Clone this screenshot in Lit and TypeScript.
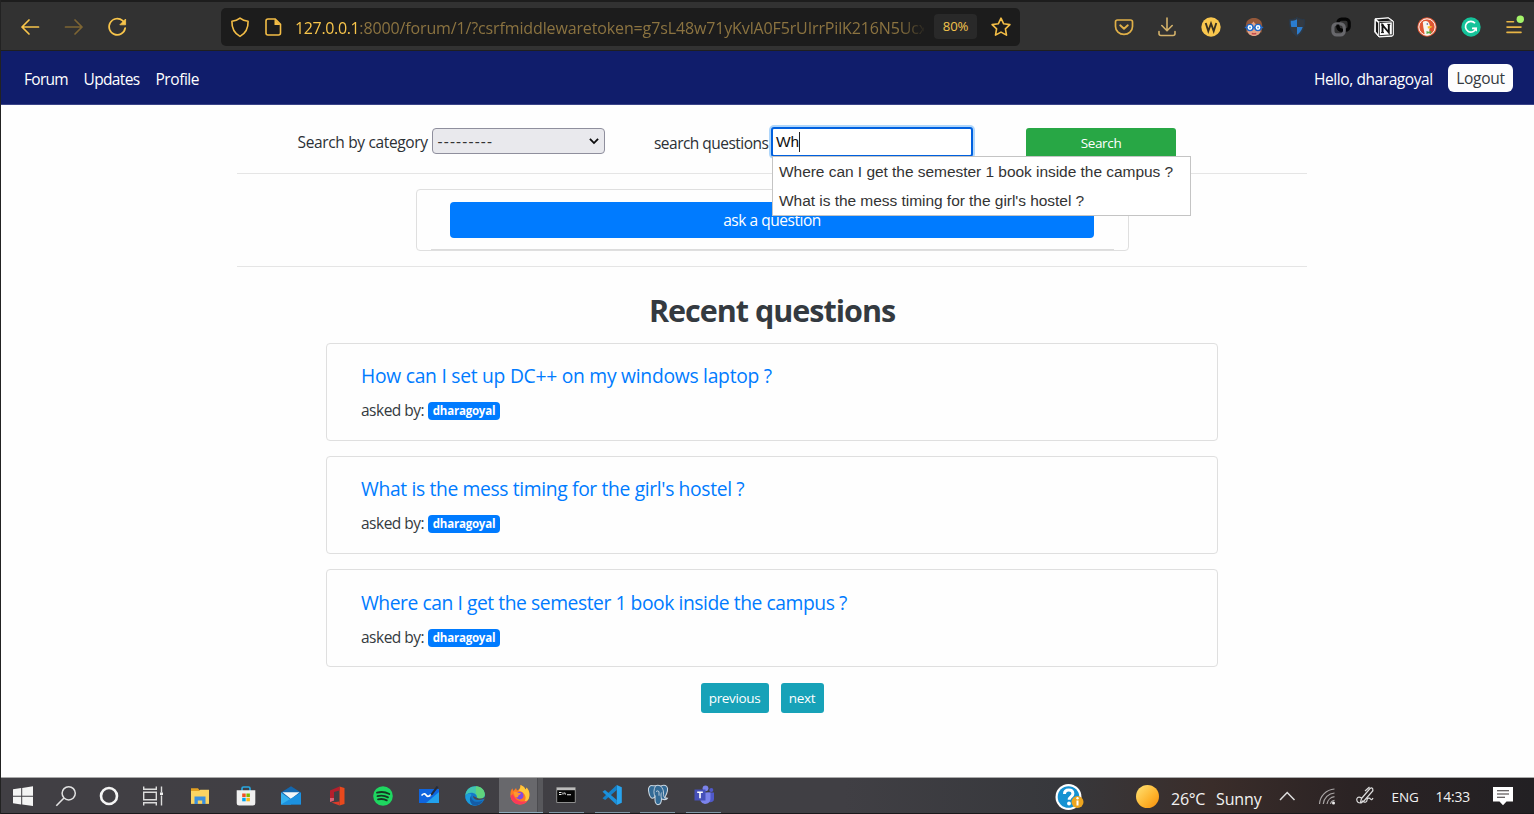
import { LitElement, html, svg, css, type SVGTemplateResult } from "lit";
import { customElement, property } from "lit/decorators.js";
import { styleMap } from "lit/directives/style-map.js";

const GOLD = "#f3bd46";

const icons: Record<string, SVGTemplateResult> = {
  back: svg`<path d="M20.5 12H4M11 5l-7 7 7 7" fill="none" stroke="#f8c54b" stroke-width="1.7" stroke-linecap="round" stroke-linejoin="round"/>`,
  forward: svg`<path d="M3.5 12H20M13 5l7 7-7 7" fill="none" stroke="#7d6533" stroke-width="1.7" stroke-linecap="round" stroke-linejoin="round"/>`,
  reload: svg`<path d="M20.2 13a8.1 8.1 0 1 1-2.6-7.3l1.4 1.4" fill="none" stroke="#f8c54b" stroke-width="1.7" stroke-linecap="round"/><path d="M20.6 4v5.8h-5.8z" fill="#f8c54b" stroke="#f8c54b" stroke-width=".8" stroke-linejoin="round"/>`,
  guard: svg`<path d="M12 3.2c2.3 1.9 5 2.8 8.1 3 .2 7-2.3 12-8.1 15.2C6.200 18.200 3.700 13.200 3.900 6.200 7 6 9.700 5.100 12 3.200z" fill="none" stroke="${GOLD}" stroke-width="1.6" stroke-linejoin="round"/>`,
  page: svg`<path d="M7 4h7.200l5.300 5.300V18a2 2 0 0 1-2 2H7a2 2 0 0 1-2-2V6a2 2 0 0 1 2-2z" fill="none" stroke="${GOLD}" stroke-width="1.6"/><path d="M13.500 4v6h6z" fill="${GOLD}"/>`,
  star: svg`<path d="M12 3.200l2.700 5.600 6.200.8-4.500 4.300 1.100 6.200L12 17.100l-5.500 3 1.100-6.200-4.500-4.300 6.200-.8z" fill="none" stroke="${GOLD}" stroke-width="1.6" stroke-linejoin="round"/>`,
  pocket: svg`<path d="M5.500 5h13a2 2 0 0 1 2 2v4.500a8.500 7.800 0 0 1-17 0V7a2 2 0 0 1 2-2z" fill="none" stroke="#e0b048" stroke-width="1.7"/><path d="M8.200 10.300L12 13.800l3.800-3.500" fill="none" stroke="#e0b048" stroke-width="1.9" stroke-linecap="round" stroke-linejoin="round"/>`,
  download: svg`<path d="M12 3v12.500M6.800 10.500l5.200 5.200 5.200-5.200M4 16.500v2a2 2 0 0 0 2 2h12a2 2 0 0 0 2-2v-2" fill="none" stroke="#d3b16a" stroke-width="1.6" stroke-linecap="round" stroke-linejoin="round"/>`,
  w: svg`<circle cx="12" cy="12" r="9.700" fill="#f9c74e"/><path d="M6.700 8l2.600 8L12 8.500l2.700 7.500L17.300 8" fill="none" stroke="#3a3222" stroke-width="1.900"/>`,
  face: svg`<path d="M3.800 12C3.500 5.500 7.500 3 12 3s8.500 2.500 8.200 9l-.7 5.500h-15z" fill="#94583a"/><path d="M5.300 11c2.500-.5 5-2.500 6.200-4.500 1.500 2.500 4.200 4 7.200 4.500v4c0 3.700-3 6-6.700 6s-6.700-2.300-6.700-6z" fill="#e5a385"/><path d="M2.800 12.500h18.400" stroke="#1b67c9" stroke-width="1.500"/><circle cx="8" cy="12.500" r="3.100" fill="#fff" stroke="#1b67c9" stroke-width="1.400"/><circle cx="16" cy="12.500" r="3.100" fill="#fff" stroke="#1b67c9" stroke-width="1.400"/><circle cx="8" cy="12.500" r="1" fill="#5a9be0"/><circle cx="16" cy="12.500" r="1" fill="#5a9be0"/><path d="M9.800 18.300q2.200 1 4.400 0" stroke="#c2454a" stroke-width="1.300" fill="none"/>`,
  shield: svg`<path d="M12 2.500c2 1.500 4.500 2 7.500 2.200C19.800 13 17.200 18.300 12 21.500 6.800 18.300 4.200 13 4.500 4.700 7.500 4.500 10 4 12 2.500z" fill="#343a42" stroke="#29394a" stroke-width="1"/><path d="M12 4.200V12H6.300c-.5-2-.7-4-.6-6.200 2.300-.1 4.600-.6 6.300-1.600zM12 12h5.700c-.9 3.200-2.700 5.800-5.700 7.700z" fill="#2a7ccf"/>`,
  link: svg`<rect x="8.900" y="4.200" width="11.300" height="11" rx="3.600" fill="none" stroke="#050505" stroke-width="3.200"/><rect x="3.900" y="8.900" width="11.300" height="11" rx="3.600" fill="none" stroke="#68686c" stroke-width="3.200"/><path d="M8.900 9.500v2.100a3.600 3.600 0 0 0 3.600 3.600H14" fill="none" stroke="#050505" stroke-width="2.800"/>`,
  notion: svg`<path d="M3 3.800L16.500 2.700 21.300 6.200V20l-1 1.200L7 22l-4.300-5z" fill="#fff" stroke="#fff" stroke-width="1"/><path d="M4.500 4.500l11.700-.9 3 2.200-12 .8z" fill="#161616"/><path d="M3.900 6L6 7.700v11.500l-2.100-2.700z" fill="#161616"/><path d="M7.300 7.600l13-.8v13l-13 .9z" fill="#fff" stroke="#161616" stroke-width=".9"/><path d="M10.500 17.500V10l6.300 7.500V9.300" fill="none" stroke="#111" stroke-width="1.900"/><path d="M9 10h2.800M15.300 9.400h3M9 17.600h3" stroke="#111" stroke-width="1"/>`,
  duck: svg`<circle cx="12" cy="12" r="9.700" fill="#df5632"/><circle cx="12" cy="12" r="8.200" fill="none" stroke="#fff" stroke-width="1"/><path d="M7.800 7c2.500-2.200 6.500-1 7 3.200.3 2.500-.5 3.800-.5 5l.8 4.500q-2.700 1-5.300.3L8.300 12z" fill="#f7f4ee"/><path d="M12.500 11.500q3-.9 5 .2-2 1.900-4.500 1.700z" fill="#f8bf29"/><path d="M11.500 16l2 .8 2.700-1v3l-2.700-.6-2 .8z" fill="#56ad48"/><circle cx="12.300" cy="9" r=".8" fill="#2d4f8e"/>`,
  gram: svg`<circle cx="12" cy="12" r="9.700" fill="#15c39a"/><path d="M16 8.200a5.400 5.400 0 1 0 1 5.200H13" fill="none" stroke="#fff" stroke-width="1.700"/><path d="M14 12.700h4v4z" fill="#fff"/>`,
  menu: svg`<path d="M5 6.800h6.500M5 12.100h14M5 17.400h14" stroke="#e8b545" stroke-width="1.600" stroke-linecap="round"/><circle cx="18.300" cy="4.200" r="3.700" fill="#a4f46a"/>`,

  windows: svg`<path d="M2 5.200l8.200-1.200v7.700H2zM11.200 3.900L22 2.300v9.400H11.200zM2 12.700h8.200v7.800L2 19.300zM11.200 12.700H22v9.400l-10.800-1.600z" fill="#f4f4f4"/>`,
  search: svg`<circle cx="14.700" cy="9.300" r="6.600" fill="none" stroke="#e2e2e2" stroke-width="1.500"/><path d="M10 14l-7.700 7.700" stroke="#e2e2e2" stroke-width="1.600"/>`,
  cortana: svg`<circle cx="12" cy="12" r="8" fill="none" stroke="#f4f4f4" stroke-width="2.600"/>`,
  tasks: svg`<path d="M2.700 2.500v2.700h12.600V2.500M2.700 21.500v-2.700h12.600v2.700M2.700 8.200h12.600v7.600H2.700zM20.500 2.500v6M20.500 11.500v10" fill="none" stroke="#dcdcdc" stroke-width="1.400"/><path d="M19 8.500h3v2.500h-3z" fill="#f0f0f0"/>`,
  folder: svg`<path d="M3 4.200h7l1.500 2H21v13.500H3z" fill="#e3a122"/><path d="M3 7h8l1.300-1.200H21v13.900H3z" fill="#fbd462"/><path d="M6.500 12.500h11v7.500h-3.300v-3.500H9.800V20H6.500z" fill="#3c8fdc"/>`,
  store: svg`<path d="M8 7V4.500A1.500 1.500 0 0 1 9.500 3h5A1.500 1.500 0 0 1 16 4.500V7" fill="none" stroke="#29a8e0" stroke-width="1.700"/><path d="M2.700 6.300h18.600V19a2.500 2.500 0 0 1-2.500 2.500H5.200A2.500 2.500 0 0 1 2.700 19z" fill="#f0f0f0"/><path d="M8.200 9.500h3.500V13H8.200z" fill="#f05125"/><path d="M12.400 9.500h3.500V13h-3.500z" fill="#7eb900"/><path d="M8.200 13.800h3.500v3.500H8.200z" fill="#00a3ee"/><path d="M12.400 13.800h3.500v3.500h-3.500z" fill="#fdb813"/>`,
  mail: svg`<path d="M2 8.500L12 2.300l10 6.200v12H2z" fill="#1467ad"/><path d="M3.500 8.300h17L12 15z" fill="#f3f6f8"/><path d="M2 8.500l10 7.200V20.500H2z" fill="#36b1ee"/><path d="M22 8.500L2 20.500h20z" fill="#1c91e0"/>`,
  office: svg`<path d="M14.500 2.500l5 1.500v16l-5 1.500z" fill="#e8491d"/><path d="M14.500 2.500v4L9 8v8.500L5 18V6.500z" fill="#b41f2c"/><path d="M14.500 21.500L6.500 18.600l8-1z" fill="#df3b2a"/><path d="M5 14v4l4-1.500V14z" fill="#dc6073"/>`,
  spotify: svg`<circle cx="12" cy="12" r="9.800" fill="#1ed760"/><path d="M6 8.700q6.500-1.900 12.300 1.300M6.500 12.200q5.700-1.500 10.500 1.200M7 15.400q4.900-1.200 8.800 1" fill="none" stroke="#173622" stroke-width="1.800" stroke-linecap="round"/>`,
  board: svg`<path d="M2 5h20v14H2z" fill="#0f65df"/><path d="M9 19L22 8v11z" fill="#22a1ed"/><path d="M4.500 11.500c3-3 4-1.500 5 0s3 .8 4.500-.8" fill="none" stroke="#fff" stroke-width="1.700"/><path d="M21.500 3l-5.700 7.500-2.300 1.500.7-2.800L19.600 2z" fill="#252b3a"/>`,
  edge: svg`<circle cx="12" cy="12" r="9.800" fill="#1478c8"/><path d="M2.200 12C3 5 7.500 2.200 12.300 2.200c5.700 0 9.500 4 9.500 8.300 0 4-5 5.300-8 3.200.9-4.500-7.500-7.500-11.600-1.700z" fill="#42c5b1"/><path d="M13 2.300c5.500.2 8.800 4.100 8.800 8.200 0 4-5 5.300-8 3.200.7-1.600.2-3.200-1-4.200z" fill="#60d47d"/><path d="M8.500 11c-1.500 5 3 9 10 7-5.500 6.500-15.500 3-16.200-5.200C4 9.500 7 8.500 8.500 11z" fill="#1b9bdc"/><path d="M8.500 11.200c-1 5.300 4.200 8.700 11.200 5.300-1.200 3.200-5.700 5.500-9 5-4-2-5-7.300-2.200-10.300z" fill="#155ca6"/><path d="M10 12c.2 3.500 5.300 5.500 10.600 3l1.400 1.500V13q-4 2.700-8 .7z" fill="#4a4a4f"/>`,
  firefox: svg`<path d="M12.500 2c3 1 4.500 3 4.700 4.500 1-.5 1.200-1.300 1.200-2C21 7 21.700 10 21.200 13.500 20.400 18.500 16.500 21.500 12 21.500c-5 0-9-3.600-9.500-8.500-.3-3 .2-5.500 1.800-7.700L5.500 8 8 5l1 2.500C11 7 12.700 5 12.500 2z" fill="#ff7b22"/><path d="M12.500 2c3 1 4.700 3 4.700 4.500 1-.5 1.200-1.300 1.200-2 3 2.700 3.600 6.500 2.600 10.500-1 2.500-3 4-5 4.500 3-4 2.200-9.500-5.300-12C12 6 12.600 4 12.500 2z" fill="#ffc83a"/><path d="M2.500 13c.5 5 4.500 8.500 9.500 8.500 3 0 6-1.300 7.700-4C14 20 7 18 5 11z" fill="#fa3b59"/><circle cx="11.700" cy="12.600" r="3.800" fill="#814be0"/><path d="M5.500 9c2-1 4 .3 6 1l1.700.5-3 2.300c.3 2-2.500 2.200-3.700-.3z" fill="#ff9730"/>`,
  cmd: svg`<path d="M2.700 4.500h18.600v15H2.700z" fill="#070707" stroke="#8e8e8e" stroke-width="1"/><path d="M3 5h18v2.200H3z" fill="#bcbcbc"/><path d="M5 9.500h2.500M5 11.500h2.500M9 9.500v2M10.500 9.500l1 2M13 11.700h4" stroke="#eee" stroke-width="1.100"/>`,
  code: svg`<path d="M16.800 2l5 2.300v15.400l-5 2.300z" fill="#27a4ef"/><path d="M16.800 7L5.200 17 2.500 15.200 16.800 2z" fill="#1582ca"/><path d="M16.800 17L5 7 2.500 8.800 16.800 22z" fill="#1b91dc"/>`,
  pg: svg`<path d="M7 2.700C4 2 2 4 2.500 7.500s1.500 7 3.500 7.700c1.400.3 2.300-1 3-1.700v3.200c0 3.300 1.500 5.300 3.700 4.800 2.500-.5 2.700-2.500 2.800-5.500 3 1 5.500.2 6-.8-.8-.2-2 0-2.800-.4 2-3.800 3.800-9.300 2-11.300-1.400-1.600-4-1.300-6-.6-2-.9-4-.8-5.200-.1C8.700 2.800 8 2.800 7 2.700z" fill="#336a95" stroke="#c9d5df" stroke-width="1.100"/><path d="M9 13.500c-1.500-3-1.500-7 .5-10.500M14.700 3c1.500 2 3 4 2.800 7 0 2-.2 3 1.200 4.600M15.500 16c-.6-3.500-.8-5 .2-6.500M10 8.500q2-1.400 3 .2v4" fill="none" stroke="#c9d5df" stroke-width=".9"/>`,
  teams: svg`<circle cx="19.300" cy="7" r="2" fill="#5059c9"/><circle cx="13.500" cy="5.300" r="2.900" fill="#7b83eb"/><path d="M15 9.500h7v6.500a3.300 3.300 0 0 1-5 2.800z" fill="#5059c9"/><path d="M8.500 9.500h10V16a5.300 5.300 0 0 1-10 2z" fill="#7b83eb"/><path d="M2.500 6.500h11v11h-11z" fill="#4650b8"/><path d="M5.200 9.300h5.600M8 9.300v5.900" stroke="#fff" stroke-width="1.600"/>`,
  chevron: svg`<path d="M5 16l7.200-7.500L19.500 16" fill="none" stroke="#dedede" stroke-width="1.500"/>`,
  wifi: svg`<path d="M4.500 20A16 16 0 0 1 19.500 5M8.300 20A12 12 0 0 1 19.500 9M12 20a8.500 8.500 0 0 1 7.500-7.300M15.500 20a4.500 4.500 0 0 1 4-3.700" fill="none" stroke="#a9a5a5" stroke-width="1.200"/><circle cx="18.500" cy="19" r="1.500" fill="#eee"/>`,
  pen: svg`<path d="M8.500 14.500L17 4.500q2-1.500 2.700.3t-.7 3L10.500 17.500l-3 .7zM12 7L16.500 3M8.500 14c-3.500-2.500-5.500.5-4.500 3s5 3 6-.5M10.500 17.500c1.500 1.500 3.500.5 3.500-1.500s2.500-2.500 3.500-1 1.500.5 2.500-1" fill="none" stroke="#dcdcdc" stroke-width="1.200"/>`,
  notice: svg`<path d="M2 3h20v14.500h-6.500L12 21.300l-3.500-3.800H2z" fill="#fff"/><path d="M6 6.700h12M6 10h12M6 13.300h8" stroke="#383333" stroke-width="1.100"/>`,
  caret: svg`<path d="M5 8.500l7 7 7-7" fill="none" stroke="#0c0c0d" stroke-width="3.200"/>`,
};

@customElement("app-icon")
class AppIcon extends LitElement {
  @property() name = "";
  static styles = css`
    :host { display: block; width: 24px; height: 24px; flex: none; }
    svg { display: block; width: 100%; height: 100%; overflow: visible; }
  `;
  render() {
    return html`<svg viewBox="0 0 24 24">${icons[this.name]}</svg>`;
  }
}

@customElement("browser-bar")
class BrowserBar extends LitElement {
  static styles = css`
    :host { display: flex; height: 51px; box-sizing: border-box; align-items: center; background: #323232;
      border-top: 2px solid #1d1d1d; border-bottom: 1px solid #1f1f1f; padding-right: 8px; }
    .nav { display: flex; gap: 19.500px; padding-left: 17px; width: 203px; box-sizing: content-box; padding-top: 2px; }
    .address { display: flex; align-items: center; width: 798.500px; height: 38px; background: #1c1c1c; border-radius: 5px;
      box-sizing: border-box; padding-left: 7px; margin-top: 1px; }
    .page { margin-left: 9px; }
    .url { margin-left: 10px; width: 629px; overflow: hidden; white-space: nowrap; font-size: 16px; line-height: 26px;
      letter-spacing: -0.130px; color: #8b7340; padding-top: 2px;
      mask-image: linear-gradient(to right, #000 96%, transparent 100.500%); }
    .host { color: #f8c54b; letter-spacing: -0.350px; }
    .zoom { width: 43px; height: 25px; margin-left: 10px; border-radius: 4px; background: #292929; color: #f3c34c;
      font-size: 13.200px; line-height: 25px; text-align: center; letter-spacing: -0.200px; }
    .star { margin-left: 12px; }
    .tools { margin-left: auto; display: flex; justify-content: space-between; width: 414px; margin-top: 1px; }
  `;
  render() {
    return html`
      <div class="nav">
        <app-icon name="back"></app-icon><app-icon name="forward"></app-icon><app-icon name="reload"></app-icon>
      </div>
      <div class="address">
        <app-icon name="guard"></app-icon>
        <app-icon class="page" name="page"></app-icon>
        <div class="url"><span class="host">127.0.0.1</span>:8000/forum/1/?csrfmiddlewaretoken=g7sL48w71yKvlA0F5rUIrrPilK216N5Ucx</div>
        <div class="zoom">80%</div>
        <app-icon class="star" name="star"></app-icon>
      </div>
      <div class="tools">
        ${["pocket", "download", "w", "face", "shield", "link", "notion", "duck", "gram", "menu"].map(
          (n) => html`<app-icon name=${n}></app-icon>`
        )}
      </div>
    `;
  }
}

@customElement("question-card")
class QuestionCard extends LitElement {
  @property() heading = "";
  @property() author = "";
  @property({ type: Number }) tracking = 0;
  static styles = css`
    :host { display: block; box-sizing: border-box; height: 98px; border: 1px solid #dfdfdf; border-radius: 4px; padding: 19.300px 34px; }
    .title { font-size: 19.300px; line-height: 26px; color: #007bff; white-space: nowrap; }
    .meta { display: flex; align-items: center; margin-top: 9px; height: 24px; white-space: nowrap; }
    .by { width: 67px; font-size: 15.500px; letter-spacing: -0.500px; color: #343a40; }
    .badge { width: 72px; height: 18px; margin-top: 2px; border-radius: 4px; background: #007bff; color: #fff; text-align: center;
      font-size: 11.500px; font-weight: 700; line-height: 18px; letter-spacing: -0.200px; }
  `;
  render() {
    return html`
      <div class="title" style=${styleMap({ letterSpacing: `${this.tracking}px` })}>${this.heading}</div>
      <div class="meta"><span class="by">asked by:</span><span class="badge">${this.author}</span></div>
    `;
  }
}

@customElement("task-bar")
class TaskBar extends LitElement {
  static styles = css`
    :host { display: flex; height: 37px; box-sizing: border-box; border-top: 1px solid #aaa; border-bottom: 1px solid #1b191b;
      background: linear-gradient(90deg, #413f44 0, #403f44 55%, #37383c 69%, #3a2d2a 79%, #2b2324 88%, #222023 100%); color: #f2f2f2; }
    .system { display: flex; width: 176px; }
    .system > div { width: 43.300px; display: grid; place-items: center; }
    .apps { display: flex; }
    .app { width: 45.800px; display: grid; place-items: center; box-sizing: border-box; }
    .cell { width: 39px; height: 35px; display: grid; place-items: center; box-sizing: border-box; }
    .running .cell { width: 35px; border-bottom: 1px solid #8299a8; }
    .active .cell { width: 44px; margin-left: 1px; padding-right: 1px; border-bottom: 1px solid #8fabbc;
      background: linear-gradient(90deg, #68686c 38px, #4b4b4f 38px, #4b4b4f 39px, #58585c 39px); }
    .help { margin-left: 327.500px; width: 30px; display: grid; place-items: center; }
    .help svg { width: 30px; height: 30px; display: block; margin-top: 3px; }
    .sun { width: 23px; height: 23px; border-radius: 50%; margin: 7px 0 0 51.500px; background: linear-gradient(135deg, #ffe477, #fdb32c 60%, #f58d0c); }
    .temp { margin-left: 12.500px; width: 45px; font-size: 16px; line-height: 42px; letter-spacing: -0.300px; }
    .sunny { width: 59px; font-size: 16px; line-height: 42px; letter-spacing: -0.150px; }
    .tray { display: grid; place-items: center; width: 24px; }
    .wifi { margin-left: 15.500px; }
    .pen { margin-left: 14px; }
    .lang { margin-left: 15px; width: 44px; font-size: 13.500px; line-height: 38px; letter-spacing: -0.100px; }
    .clock { width: 55px; font-size: 13.900px; line-height: 38px; letter-spacing: -0.200px; }
  `;
  render() {
    const apps: [string, string][] = [
      ["folder", ""], ["store", ""], ["mail", ""], ["office", ""], ["spotify", ""], ["board", ""], ["edge", ""],
      ["firefox", "active"], ["cmd", "running"], ["code", "running"], ["pg", "running"], ["teams", "running"],
    ];
    return html`
      <div class="system">
        ${["windows", "search", "cortana", "tasks"].map((n) => html`<div><app-icon name=${n}></app-icon></div>`)}
      </div>
      <div class="apps">
        ${apps.map(([n, s]) => html`<div class="app ${s}"><div class="cell"><app-icon name=${n}></app-icon></div></div>`)}
      </div>
      <div class="help">
        <svg viewBox="0 0 30 30">
          <circle cx="14.500" cy="15" r="13" fill="#fff"/><circle cx="14.500" cy="15" r="10.800" fill="#1692d2"/>
          <path d="M10.500 12q0-4 4.200-4t4.200 3.700c0 3-3.700 2.800-3.700 6" fill="none" stroke="#fff" stroke-width="3"/><circle cx="15" cy="21.500" r="1.900" fill="#fff"/>
          <circle cx="23.500" cy="20" r="6" fill="#eda51f"/><path d="M23.500 18.500v5" stroke="#fff" stroke-width="2"/><circle cx="23.500" cy="16.300" r="1.200" fill="#fff"/>
        </svg>
      </div>
      <div class="sun"></div>
      <div class="temp">26°C</div>
      <div class="sunny">Sunny</div>
      <div class="tray"><app-icon name="chevron"></app-icon></div>
      <div class="tray wifi"><app-icon name="wifi"></app-icon></div>
      <div class="tray pen"><app-icon name="pen"></app-icon></div>
      <div class="lang">ENG</div>
      <div class="clock">14:33</div>
      <div class="tray"><app-icon name="notice"></app-icon></div>
    `;
  }
}

@customElement("app-root")
class AppRoot extends LitElement {
  static styles = css`
    :host { display: flex; flex-direction: column; width: 1534px; height: 814px; box-sizing: border-box; overflow: hidden;
      border-left: 1px solid #222; background: #fefefe; color: #2b3035; font-family: "Open Sans", "Noto Sans", sans-serif; }
    browser-bar, task-bar { flex: none; }
    .navbar { flex: none; height: 54px; box-sizing: border-box; border-bottom: 1px solid #3b4488; background: #101d6b; color: #fff;
      display: flex; align-items: center; padding: 2px 21px 0 23px; font-size: 15.500px; white-space: nowrap; }
    .forum { width: 59.500px; letter-spacing: -0.700px; }
    .updates { width: 72px; letter-spacing: -0.650px; }
    .profile { letter-spacing: -0.450px; }
    .hello { margin-left: auto; width: 134px; letter-spacing: -0.420px; }
    .logout { width: 65px; height: 28px; margin-top: -2px; border-radius: 6px; background: #fdfdfe; color: #343a40; text-align: center;
      line-height: 29px; letter-spacing: -0.250px; }
    main { flex: 1; min-height: 0; width: 1070px; margin-left: 236px; display: flex; flex-direction: column; align-items: center; }
    .filters { align-self: stretch; height: 69px; box-sizing: border-box; border-bottom: 1px solid #e5e5e5; display: flex;
      align-items: flex-start; padding: 22px 0 0 60.500px; font-size: 15.500px; white-space: nowrap; }
    .cat { width: 134px; line-height: 31px; margin-top: -0.500px; letter-spacing: -0.350px; }
    .select { width: 173px; height: 26px; margin-top: 1px; box-sizing: border-box; border: 1px solid #8f8f9d; border-radius: 4px; background: #e9e9ed;
      display: flex; align-items: center; padding: 0 3px 0 5px; color: #333; line-height: 24px; letter-spacing: 1.200px; }
    .select app-icon { width: 14px; height: 14px; margin-left: auto; }
    .q { margin-left: 49.500px; width: 117px; line-height: 32px; letter-spacing: -0.520px; }
    .field { position: relative; width: 202px; height: 30px; box-sizing: border-box; border: 2px solid #0060df; border-radius: 3px;
      box-shadow: 0 0 0 2px #aed6fb; background: #fff; padding: 0 3px; display: flex; align-items: center; color: #111;
      font: 15.500px "Liberation Sans", Arial, sans-serif; letter-spacing: -0.200px; }
    .cursor { width: 1px; height: 20px; background: #222; }
    .menu { position: absolute; left: -1px; top: 27px; width: 418.500px; height: 60px; box-sizing: border-box; border: 1px solid #c4c4c4;
      background: #fff; color: #333; font: 15.500px/29px "Liberation Sans", Arial, sans-serif; letter-spacing: -0.040px; padding-left: 6px; z-index: 2; }
    .go { margin: 1px 0 0 53px; width: 150px; height: 31px; border-radius: 3px; background: #28a745; color: #fff; text-align: center;
      font-size: 13.500px; line-height: 30px; letter-spacing: -0.350px; }
    .askbox { flex: none; width: 713px; height: 62px; margin-top: 15px; box-sizing: border-box; border: 1px solid #dfdfdf; border-radius: 4px;
      display: flex; flex-direction: column; align-items: center; justify-content: space-between; padding-top: 12px; }
    .ask { width: 644px; height: 36px; border-radius: 4px; background: #007bff; color: #fff; text-align: center; font-size: 15.500px;
      line-height: 37px; letter-spacing: -0.470px; }
    .rule { width: 683px; height: 1px; background: #dcdcdc; }
    hr { flex: none; align-self: stretch; height: 1px; margin: 15px 0 0; border: 0; background: #e5e5e5; }
    h2 { margin: 20px 0 0; font-size: 30.500px; line-height: 46px; font-weight: 700; color: #343a40; letter-spacing: -1px; white-space: nowrap; }
    .list { width: 892px; margin-top: 9.500px; display: flex; flex-direction: column; gap: 15.400px; }
    .pager { display: flex; gap: 12px; margin: 15.500px 0 0 -20px; }
    .btn { height: 30px; border-radius: 3px; background: #17a2b8; color: #fff; text-align: center; font-size: 13.500px; line-height: 30px; letter-spacing: -0.350px; }
    .prev { width: 68px; }
    .next { width: 43px; }
  `;
  render() {
    const first = "Where can I get the semester 1 book inside the campus ?";
    const second = "What is the mess timing for the girl's hostel ?";
    const questions: [string, number][] = [
      ["How can I set up DC++ on my windows laptop ?", -0.27],
      [second, -0.36],
      [first, -0.45],
    ];
    return html`
      <browser-bar></browser-bar>
      <div class="navbar">
        <span class="forum">Forum</span><span class="updates">Updates</span><span class="profile">Profile</span>
        <span class="hello">Hello, dharagoyal</span><span class="logout">Logout</span>
      </div>
      <main>
        <div class="filters">
          <span class="cat">Search by category</span>
          <div class="select">---------<app-icon name="caret"></app-icon></div>
          <span class="q">search questions</span>
          <div class="field">Wh<span class="cursor"></span>
            <div class="menu"><div>${first}</div><div>${second}</div></div>
          </div>
          <div class="go">Search</div>
        </div>
        <div class="askbox"><div class="ask">ask a question</div><div class="rule"></div></div>
        <hr />
        <h2>Recent questions</h2>
        <div class="list">
          ${questions.map(
            ([t, tracking]) => html`<question-card heading=${t} tracking=${tracking} author="dharagoyal"></question-card>`
          )}
        </div>
        <div class="pager"><div class="btn prev">previous</div><div class="btn next">next</div></div>
      </main>
      <task-bar></task-bar>
    `;
  }
}
